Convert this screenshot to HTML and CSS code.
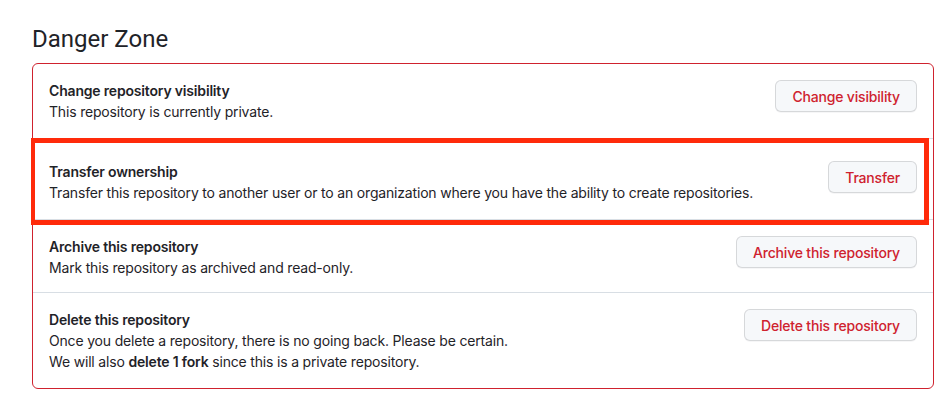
FILE: index.html
```html
<!DOCTYPE html>
<html lang="en">
<head>
<meta charset="utf-8">
<title>Danger Zone</title>
<link rel="stylesheet" href="styles.css">
</head>
<body>
<div class="page">
  <h2 class="subhead">Danger Zone</h2>
  <div class="danger-box">
    <div class="row">
      <div class="info">
        <strong class="title">Change repository visibility</strong>
        <p class="desc">This repository is currently private.</p>
      </div>
      <button class="btn">Change visibility</button>
    </div>
    <div class="row row-highlight">
      <div class="info">
        <strong class="title">Transfer ownership</strong>
        <p class="desc">Transfer this repository to another user or to an organization where you have the ability to create repositories.</p>
      </div>
      <button class="btn">Transfer</button>
    </div>
    <div class="row row-archive">
      <div class="info">
        <strong class="title">Archive this repository</strong>
        <p class="desc">Mark this repository as archived and read-only.</p>
      </div>
      <button class="btn">Archive this repository</button>
    </div>
    <div class="row">
      <div class="info">
        <strong class="title">Delete this repository</strong>
        <p class="desc">Once you delete a repository, there is no going back. Please be certain.<br>We will also <b>delete 1 fork</b> since this is a private repository.</p>
      </div>
      <button class="btn">Delete this repository</button>
    </div>
  </div>
</div>
</body>
</html>
```

FILE: styles.css
```css
html, body {
  margin: 0;
  padding: 0;
  background: #ffffff;
}
body {
  font-family: Inter, "Liberation Sans", sans-serif;
  color: #1f2328;
  font-size: 14px;
  letter-spacing: -0.18px;
}
.page {
  padding: 24px 14px 0 32px;
  width: 902px;
}
.subhead {
  margin: 0 0 9px;
  font-family: Roboto, Inter, "Liberation Sans", sans-serif;
  font-size: 24px;
  font-weight: 400;
  line-height: 30px;
  letter-spacing: 0;
  color: #1f2328;
}
.danger-box {
  border: 1px solid #cf222e;
  border-radius: 6px;
  display: flex;
  flex-direction: column;
}
.row {
  display: flex;
  align-items: flex-start;
  justify-content: space-between;
  gap: 16px;
  padding: 16px;
  border-top: 1px solid #d8dee4;
}
.row:first-child {
  border-top: none;
}
.row-highlight {
  position: relative;
  padding-top: 22px;
}
.row-archive {
  padding-bottom: 14px;
}
.row-highlight::after {
  content: "";
  position: absolute;
  top: -1px;
  left: -2px;
  right: 4px;
  bottom: -6px;
  border: 5px solid #ff2a0a;
  border-left-width: 4px;
  pointer-events: none;
}
.info {
  display: flex;
  flex-direction: column;
}
.title {
  font-weight: 600;
  line-height: 21px;
}
.desc {
  margin: 0;
  line-height: 21px;
}
.desc b {
  font-weight: 600;
}
.btn {
  flex: none;
  height: 32px;
  padding: 0 16px;
  font-family: inherit;
  font-size: 14px;
  font-weight: 500;
  letter-spacing: -0.18px;
  color: #cf222e;
  background: #f6f8fa;
  border: 1px solid rgba(31, 35, 40, 0.15);
  border-radius: 6px;
  box-shadow: 0 1px 0 rgba(31, 35, 40, 0.04);
}
```
